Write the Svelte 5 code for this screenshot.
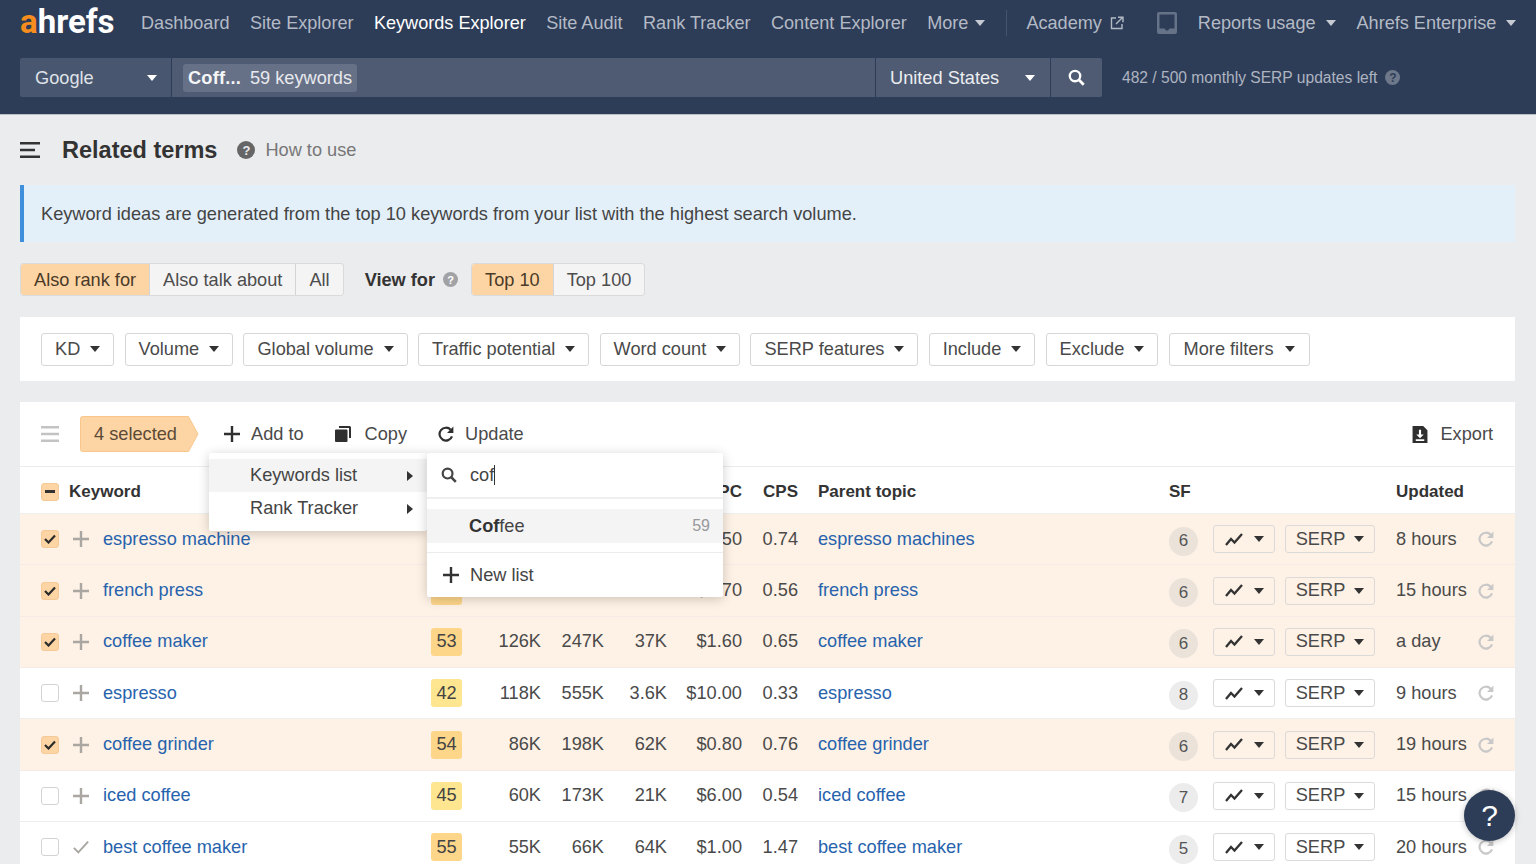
<script>
  const nav = ['Dashboard', 'Site Explorer', 'Keywords Explorer', 'Site Audit', 'Rank Tracker', 'Content Explorer'];
  const filters = ['KD', 'Volume', 'Global volume', 'Traffic potential', 'Word count', 'SERP features', 'Include', 'Exclude', 'More filters'];
  const rows = [
    { k: 'espresso machine', kd: '', kc: 'o', v: '', g: '', t: '', c: '$3.50', s: '0.74', sf: 6, u: '8 hours', sel: true, icon: 'plus' },
    { k: 'french press', kd: '', kc: 'o', v: '', g: '', t: '', c: '$1.70', s: '0.56', sf: 6, u: '15 hours', sel: true, icon: 'plus' },
    { k: 'coffee maker', kd: 53, kc: 'o', v: '126K', g: '247K', t: '37K', c: '$1.60', s: '0.65', sf: 6, u: 'a day', sel: true, icon: 'plus' },
    { k: 'espresso', kd: 42, kc: 'y', v: '118K', g: '555K', t: '3.6K', c: '$10.00', s: '0.33', sf: 8, u: '9 hours', sel: false, icon: 'plus' },
    { k: 'coffee grinder', kd: 54, kc: 'o', v: '86K', g: '198K', t: '62K', c: '$0.80', s: '0.76', sf: 6, u: '19 hours', sel: true, icon: 'plus' },
    { k: 'iced coffee', kd: 45, kc: 'y', v: '60K', g: '173K', t: '21K', c: '$6.00', s: '0.54', sf: 7, u: '15 hours', sel: false, icon: 'plus' },
    { k: 'best coffee maker', kd: 55, kc: 'o', v: '55K', g: '66K', t: '64K', c: '$1.00', s: '1.47', sf: 5, u: '20 hours', sel: false, icon: 'check' }
  ];
</script>

{#snippet caret(cls)}
  <svg class="caret {cls}" viewBox="0 0 10 6" aria-hidden="true"><path d="M0 0h10L5 6z" /></svg>
{/snippet}
{#snippet refresh(cls)}
  <svg class={cls} viewBox="0 0 16 16" fill="none" aria-hidden="true"><path d="M14 10.300A6.400 6.400 0 1 1 12.700 3.800" stroke="currentColor" stroke-width="2.200" /><path d="M15.400 .6v6.400H9z" fill="currentColor" /></svg>
{/snippet}
{#snippet search(cls)}
  <svg class={cls} viewBox="0 0 16 16" fill="none" aria-hidden="true"><circle cx="6.600" cy="6.600" r="4.900" stroke="currentColor" stroke-width="2.200" /><path d="M10.200 10.200l4.600 4.600" stroke="currentColor" stroke-width="2.600" /></svg>
{/snippet}
{#snippet plus(cls)}
  <svg class={cls} viewBox="0 0 16 16" aria-hidden="true"><path d="M6.800 0h2.400v6.800H16v2.400H9.200V16H6.800V9.200H0V6.800h6.800z" fill="currentColor" /></svg>
{/snippet}

<div class="page">
  <header class="head">
    <div class="nav">
      <span class="logo"><span class="logo-a">a</span>hrefs</span>
      <div class="links">
        {#each nav as n}
          <span class:active={n === 'Keywords Explorer'}>{n}</span>
        {/each}
        <span class="with-caret">More {@render caret('c-nav')}</span>
      </div>
      <span class="vr"></span>
      <span class="academy">Academy
        <svg class="ext" viewBox="0 0 14 14" fill="none" aria-hidden="true"><path d="M6 2H1.500v10.500H12V8" stroke="currentColor" stroke-width="1.400" /><path d="M6 8l6-6M8 1.200h5v5" stroke="currentColor" stroke-width="1.400" /></svg>
      </span>
      <svg class="inbox" viewBox="0 0 20 22" aria-hidden="true"><path fill-rule="evenodd" d="M2 0h16a2 2 0 0 1 2 2v18a2 2 0 0 1-2 2H2a2 2 0 0 1-2-2V2a2 2 0 0 1 2-2zm.5 2.500v14h5l1.500 2h2l1.500-2h5v-14z" /></svg>
      <span class="with-caret usage">Reports usage {@render caret('c-nav')}</span>
      <span class="with-caret ent">Ahrefs Enterprise {@render caret('c-nav')}</span>
    </div>
    <div class="searchrow">
      <div class="bar">
        <div class="engine"><span>Google</span>{@render caret('c-white')}</div>
        <div class="query"><span class="chip"><b>Coff...</b> <span class="chip-n">59 keywords</span></span></div>
        <div class="country"><span>United States</span>{@render caret('c-white')}</div>
        <div class="go">{@render search('go-ic')}</div>
      </div>
      <span class="left">482 / 500 monthly SERP updates left <span class="q-dark">?</span></span>
    </div>
  </header>

  <main class="body">
    <div class="title">
      <svg class="menu" viewBox="0 0 20 16" aria-hidden="true"><path d="M0 0h20v2.400H0zM0 6.800h15v2.400H0zM0 13.600h20V16H0z" /></svg>
      <h1>Related terms</h1>
      <span class="q-grey">?</span>
      <span class="how">How to use</span>
    </div>

    <div class="notice">Keyword ideas are generated from the top 10 keywords from your list with the highest search volume.</div>

    <div class="tabs">
      <div class="seg">
        <span class="on">Also rank for</span><span>Also talk about</span><span>All</span>
      </div>
      <b class="viewfor">View for</b>
      <span class="q-small">?</span>
      <div class="seg">
        <span class="on">Top 10</span><span>Top 100</span>
      </div>
    </div>

    <div class="filters">
      {#each filters as f}
        <button class="fbtn">{f} {@render caret('c-dark')}</button>
      {/each}
    </div>

    <section class="table">
      <div class="tools">
        <svg class="grip" viewBox="0 0 18 16" aria-hidden="true"><path d="M0 0h18v2.500H0zM0 6.700h18v2.500H0zM0 13.500h18V16H0z" /></svg>
        <span class="selected">
          <svg class="sel-bg" viewBox="0 0 119 36" aria-hidden="true"><path d="M2.500.5H108.500L118 18l-9.500 17.500H2.500a2 2 0 0 1-2-2V2.500a2 2 0 0 1 2-2z" fill="#fdd5a5" stroke="#f9c78c" /></svg>
          <span class="sel-t">4 selected</span>
        </span>
        <span class="tool t-add">{@render plus('tool-ic')} Add to</span>
        <span class="tool t-copy">
          <svg class="tool-ic" viewBox="0 0 16 16" aria-hidden="true"><path d="M4 0h10.500A1.500 1.500 0 0 1 16 1.500V12h-2V2H4z" fill="currentColor" /><path d="M1 3.500h10.500a1 1 0 0 1 1 1V15a1 1 0 0 1-1 1H1a1 1 0 0 1-1-1V4.500a1 1 0 0 1 1-1z" fill="currentColor" /></svg>
          Copy</span>
        <span class="tool t-upd">{@render refresh('tool-ic')} Update</span>
        <span class="tool t-exp">
          <svg class="exp-ic" viewBox="0 0 14 16" aria-hidden="true"><path fill-rule="evenodd" d="M0 0h10l4 4v12H0zM6 3.500v4.500H3.500L7 11.500 10.500 8H8V3.500zM3 12.500v1.500h8v-1.500z" fill="currentColor" /></svg>
          Export</span>
      </div>

      <div class="grid th">
        <span class="cb minus"><i></i></span>
        <span class="kw-h">Keyword</span>
        <span></span>
        <span></span>
        <span></span>
        <span></span>
        <span></span>
        <span class="r">CPC</span>
        <span class="r">CPS</span>
        <span class="pt">Parent topic</span>
        <span>SF</span>
        <span></span>
        <span></span>
        <span class="up">Updated</span>
        <span></span>
      </div>

      {#each rows as row}
        <div class="grid tr" class:sel={row.sel}>
          <span class="cb" class:checked={row.sel}>
            {#if row.sel}
              <svg viewBox="0 0 12 10" aria-hidden="true"><path d="M1 5l3.500 3.500L11 1.500" fill="none" stroke="#2b2b2b" stroke-width="2.200" /></svg>
            {/if}
          </span>
          <span class="act">
            {#if row.icon === 'plus'}
              {@render plus('act-ic')}
            {:else}
              <svg class="act-ic" viewBox="0 0 18 16" aria-hidden="true"><path d="M1 9l5 5L17 2" fill="none" stroke="currentColor" stroke-width="2.200" /></svg>
            {/if}
          </span>
          <a class="link" href="#top">{row.k}</a>
          <span class="kd" class:y={row.kc === 'y'}>{row.kd}</span>
          <span class="r">{row.v}</span>
          <span class="r">{row.g}</span>
          <span class="r">{row.t}</span>
          <span class="r">{row.c}</span>
          <span class="r">{row.s}</span>
          <a class="link pt" href="#top">{row.k}{row.k === 'espresso machine' ? 's' : ''}</a>
          <span class="sf">{row.sf}</span>
          <span class="tc-trend"><span class="mini trend">
            <svg class="spark" viewBox="0 0 18 13" aria-hidden="true"><path d="M1 12l5-6 3.500 3.500L17 1" fill="none" stroke="currentColor" stroke-width="2.300" /></svg>
            {@render caret('c-dark')}</span></span>
          <span class="tc-serp"><span class="mini serp">SERP {@render caret('c-dark')}</span></span>
          <span class="up">{row.u}</span>
          {@render refresh('rf')}
        </div>
      {/each}

      <div class="pop pop-a">
        <div class="pa-item hi"><span>Keywords list</span><svg class="tri" viewBox="0 0 6 10" aria-hidden="true"><path d="M0 0l6 5-6 5z" /></svg></div>
        <div class="pa-item"><span>Rank Tracker</span><svg class="tri" viewBox="0 0 6 10" aria-hidden="true"><path d="M0 0l6 5-6 5z" /></svg></div>
      </div>
      <div class="pop pop-b">
        <div class="pb-search">{@render search('pb-ic')}<span>cof<i class="cursor"></i></span></div>
        <div class="pb-list">
          <div class="pb-item"><span><b>Cof</b>fee</span><em>59</em></div>
        </div>
        <div class="pb-new">{@render plus('pb-plus')}<span>New list</span></div>
      </div>
    </section>
  </main>

  <div class="help">?</div>
</div>

<style>
  :global(body) { margin: 0; background: #ebecee; overflow: hidden; }
  .page { width: 1536px; height: 864px; overflow: hidden; position: relative; font-family: "Liberation Sans", Arial, sans-serif; font-size: 18.200px; color: #4a4a4a; }

  .head { height: 114px; background: #2d3d58; border-bottom: 1px solid #b9bfc9; }
  .nav { height: 46px; display: flex; align-items: center; padding-left: 20px; color: #b4bac5; white-space: nowrap; font-size: 18.100px; }
  .logo { font-family: Roboto, sans-serif; font-weight: 700; font-size: 33px; color: #fff; width: 121px; position: relative; top: -2px; }
  .logo-a { color: #f78d1e; }
  .links { display: flex; gap: 20.400px; align-items: center; }
  .links .active { color: #fff; }
  .with-caret { display: inline-flex; align-items: center; gap: 7px; }
  .vr { width: 1px; height: 26px; background: #45536b; margin: 0 19px 0 21px; }
  .academy { display: inline-flex; align-items: center; gap: 8px; }
  .ext { width: 14px; height: 14px; }
  .inbox { width: 20px; height: 22px; fill: #667287; margin-left: 33px; }
  .usage { margin-left: 21px; gap: 10px; }
  .ent { margin-left: 21px; gap: 10px; }
  .caret { width: 10px; height: 6px; flex: none; }
  .c-nav { fill: #c6cad2; }
  .c-white { fill: #fff; }
  .c-dark { fill: #333; }

  .searchrow { display: flex; align-items: center; padding: 12px 0 0 20px; }
  .bar { display: flex; height: 39px; width: 1082px; color: #fff; }
  .engine { flex: none; background: #49566f; display: flex; align-items: center; justify-content: space-between; padding: 1px 14px 0 15px; height: 38px; border-radius: 2px 0 0 2px; color: #dfe2e7; margin-right: 1px; width: 122px; }
  .query { flex: 1; background: #4f5b73; display: flex; align-items: center; padding-left: 11px; }
  .chip { background: #667187; border-radius: 3px; height: 28px; box-sizing: border-box; padding: 1px 5px 0; display: flex; align-items: center; gap: 9px; color: #e7e9ed; }
  .chip b { color: #f5f6f7; letter-spacing: .2px; }
  .country { width: 174px; flex: none; margin-left: 1px; background: #4f5b73; display: flex; align-items: center; justify-content: space-between; padding: 1px 15px 0 14px; box-sizing: border-box; color: #eceef1; }
  .go { width: 51px; flex: none; margin-left: 1px; background: #4f5b73; display: flex; align-items: center; justify-content: center; border-radius: 0 2px 2px 0; }
  .go-ic { width: 17px; height: 17px; color: #fff; }
  .left { margin-left: 20px; font-size: 15.600px; color: #adb4c0; display: flex; align-items: center; gap: 2px; }
  .q-dark { width: 15px; height: 15px; border-radius: 50%; background: #6d788b; color: #2d3d58; font-size: 12px; font-weight: 700; display: inline-flex; align-items: center; justify-content: center; margin-left: 6px; }

  .body { padding: 0 21px 0 20px; }
  .title { display: flex; align-items: center; height: 70px; }
  .menu { width: 20px; height: 16px; fill: #333; flex: none; }
  h1 { margin: 0 0 0 22px; font-size: 23.500px; font-weight: 700; color: #333; }
  .q-grey { width: 18px; height: 18px; border-radius: 50%; background: #666; color: #ebecee; font-size: 13px; font-weight: 700; display: inline-flex; align-items: center; justify-content: center; margin-left: 20px; }
  .how { margin-left: 10px; color: #777; }

  .notice { height: 57px; background: #e3f0fa; border-left: 4px solid #3f8fdc; box-sizing: border-box; display: flex; align-items: center; padding: 1px 0 0 17px; color: #444; }

  .tabs { display: flex; align-items: center; height: 33px; margin-top: 21px; }
  .seg { display: flex; height: 33px; background: #f4f4f5; border: 1px solid #d9dadc; border-radius: 3px; box-sizing: border-box; }
  .seg span { padding: 1px 13px 0; display: flex; align-items: center; border-left: 1px solid #d3d4d6; color: #4d4d4d; }
  .seg span:first-child { border-left: 0; }
  .seg .on { background: #fdd5a5; color: #4a3a28; border-radius: 3px 0 0 3px; }
  .viewfor { margin-left: 21px; color: #333; padding-top: 1px; }
  .q-small { width: 15px; height: 15px; border-radius: 50%; background: #a1a2a5; color: #fff; font-size: 11px; font-weight: 700; display: inline-flex; align-items: center; justify-content: center; margin: 0 13px 0 8px; }

  .filters { margin-top: 21px; height: 64px; background: #fff; display: flex; align-items: center; gap: 10.250px; padding-left: 21px; box-sizing: border-box; }
  .fbtn { height: 33px; padding: 0 13px; background: #fff; border: 1px solid #d6d7d9; border-radius: 3px; font: inherit; color: #4a4a4a; display: inline-flex; align-items: center; gap: 10px; box-sizing: border-box; white-space: nowrap; }
  .fbtn:last-child { padding: 0 14px; gap: 11px; }

  .table { margin-top: 21px; background: #fff; position: relative; }
  .tools { height: 64px; display: flex; align-items: center; border-bottom: 1px solid #ececec; padding-left: 21px; position: relative; }
  .grip { width: 18px; height: 16px; fill: #c3c3c3; }
  .selected { margin-left: 21px; height: 36px; width: 119px; display: flex; align-items: center; padding-left: 14px; box-sizing: border-box; position: relative; color: #5b4a36; flex: none; }
  .sel-bg { position: absolute; left: 0; top: 0; width: 119px; height: 36px; }
  .sel-t { position: relative; }
  .tool { display: flex; align-items: center; color: #4a4a4a; white-space: nowrap; }
  .tool-ic { width: 16px; height: 16px; color: #2f2f2f; margin-right: 11px; }
  .t-add { margin-left: 25px; }
  .t-copy { margin-left: 31px; }
  .t-upd { margin-left: 31px; }
  .t-copy .tool-ic { margin-right: 14px; }
  .t-exp { margin-left: auto; margin-right: 22px; }
  .exp-ic { width: 16px; height: 17px; color: #2f2f2f; margin-right: 12px; }

  .grid { display: grid; grid-template-columns: 18px 44px 328px 31px 79px 63px 63px 75px 56px 371px 29px 77px 100px 103px 16px; align-items: center; padding-left: 21px; white-space: nowrap; position: relative; }
  .th { height: 47px; padding-top: 3px; box-sizing: border-box; color: #333; font-weight: 700; font-size: 17px; border-bottom: 1px solid #eee; }
  .kw-h { margin-left: 10px; }
  .r { text-align: right; }
  .pt { padding-left: 20px; }
  .up { padding-left: 21px; }
  .tr { height: 51.350px; box-sizing: border-box; border-bottom: 1px solid #ededed; }
  .tr:last-child { border-bottom: 0; }
  .tr.sel { background: #fef1e5; border-bottom-color: #f5ebe4; }
  .cb { width: 18px; height: 18px; border: 1px solid #d3d3d3; border-radius: 3px; box-sizing: border-box; background: #fff; display: flex; align-items: center; justify-content: center; }
  .cb svg { width: 12px; height: 10px; }
  .cb.checked, .cb.minus { background: #fdd5a5; border-color: #f5c998; }
  .cb.minus i { width: 10px; height: 2.500px; background: #333; display: block; }
  .act { display: flex; justify-content: flex-start; padding-left: 14px; }
  .act-ic { width: 16px; height: 16px; color: #aaa7a3; }
  .link { color: #2763ad; text-decoration: none; }
  .kd { width: 31px; height: 28px; border-radius: 3px; background: #fdd68a; display: flex; align-items: center; justify-content: center; color: #444; }
  .kd.y { background: #fde68f; }
  .sf { width: 29px; height: 29px; border-radius: 50%; background: #ececec; color: #555; display: flex; align-items: center; justify-content: center; font-size: 17px; position: relative; top: 2px; }
  .sel .sf { background: #ebe3da; }
  .tc-trend { padding-left: 15px; display: block; }
  .tc-serp { padding-left: 10px; display: block; }
  .mini { height: 28px; border: 1px solid #dcdad8; border-radius: 3px; box-sizing: border-box; display: flex; align-items: center; justify-content: center; background: transparent; color: #4a4a4a; }
  .trend { width: 62px; gap: 11px; }
  .serp { width: 90px; gap: 9px; }
  .spark { width: 18px; height: 13px; color: #333; }
  .rf { width: 16px; height: 16px; color: #c8c8c8; }

  .pop { position: absolute; background: #fff; box-shadow: 0 2px 12px rgba(0,0,0,.2); border-radius: 2px; color: #444; }
  .pop-a { left: 189px; top: 51px; width: 218px; height: 78px; padding-top: 6px; box-sizing: border-box; z-index: 2; }
  .pa-item { height: 33px; display: flex; align-items: center; justify-content: space-between; padding: 0 14px 0 41px; }
  .pa-item.hi { background: #f4f4f5; }
  .tri { width: 6px; height: 10px; fill: #333; }
  .pop-b { left: 407px; top: 51px; width: 296px; height: 144px; z-index: 3; }
  .pb-search { height: 44px; display: flex; align-items: center; padding-left: 14px; gap: 13px; border-bottom: 2px solid #efefef; }
  .pb-ic { width: 16px; height: 16px; color: #444; }
  .cursor { display: inline-block; width: 1px; height: 20px; background: #333; vertical-align: -4px; }
  .pb-list { padding: 10px 0 9px; border-bottom: 1px solid #ececec; }
  .pb-item { height: 34px; background: #f4f4f5; display: flex; align-items: center; justify-content: space-between; padding: 0 13px 0 42px; }
  .pb-item b { color: #333; }
  .pb-item em { font-style: normal; color: #999; font-size: 16px; }
  .pb-new { height: 44px; display: flex; align-items: center; padding-left: 16px; gap: 11px; }
  .pb-plus { width: 16px; height: 16px; color: #333; }

  .help { position: absolute; left: 1464px; top: 790px; width: 51px; height: 51px; border-radius: 50%; background: #2d3d58; color: #fff; font-size: 30px; display: flex; align-items: center; justify-content: center; box-shadow: 0 1px 6px rgba(0,0,0,.25); z-index: 5; }
</style>
